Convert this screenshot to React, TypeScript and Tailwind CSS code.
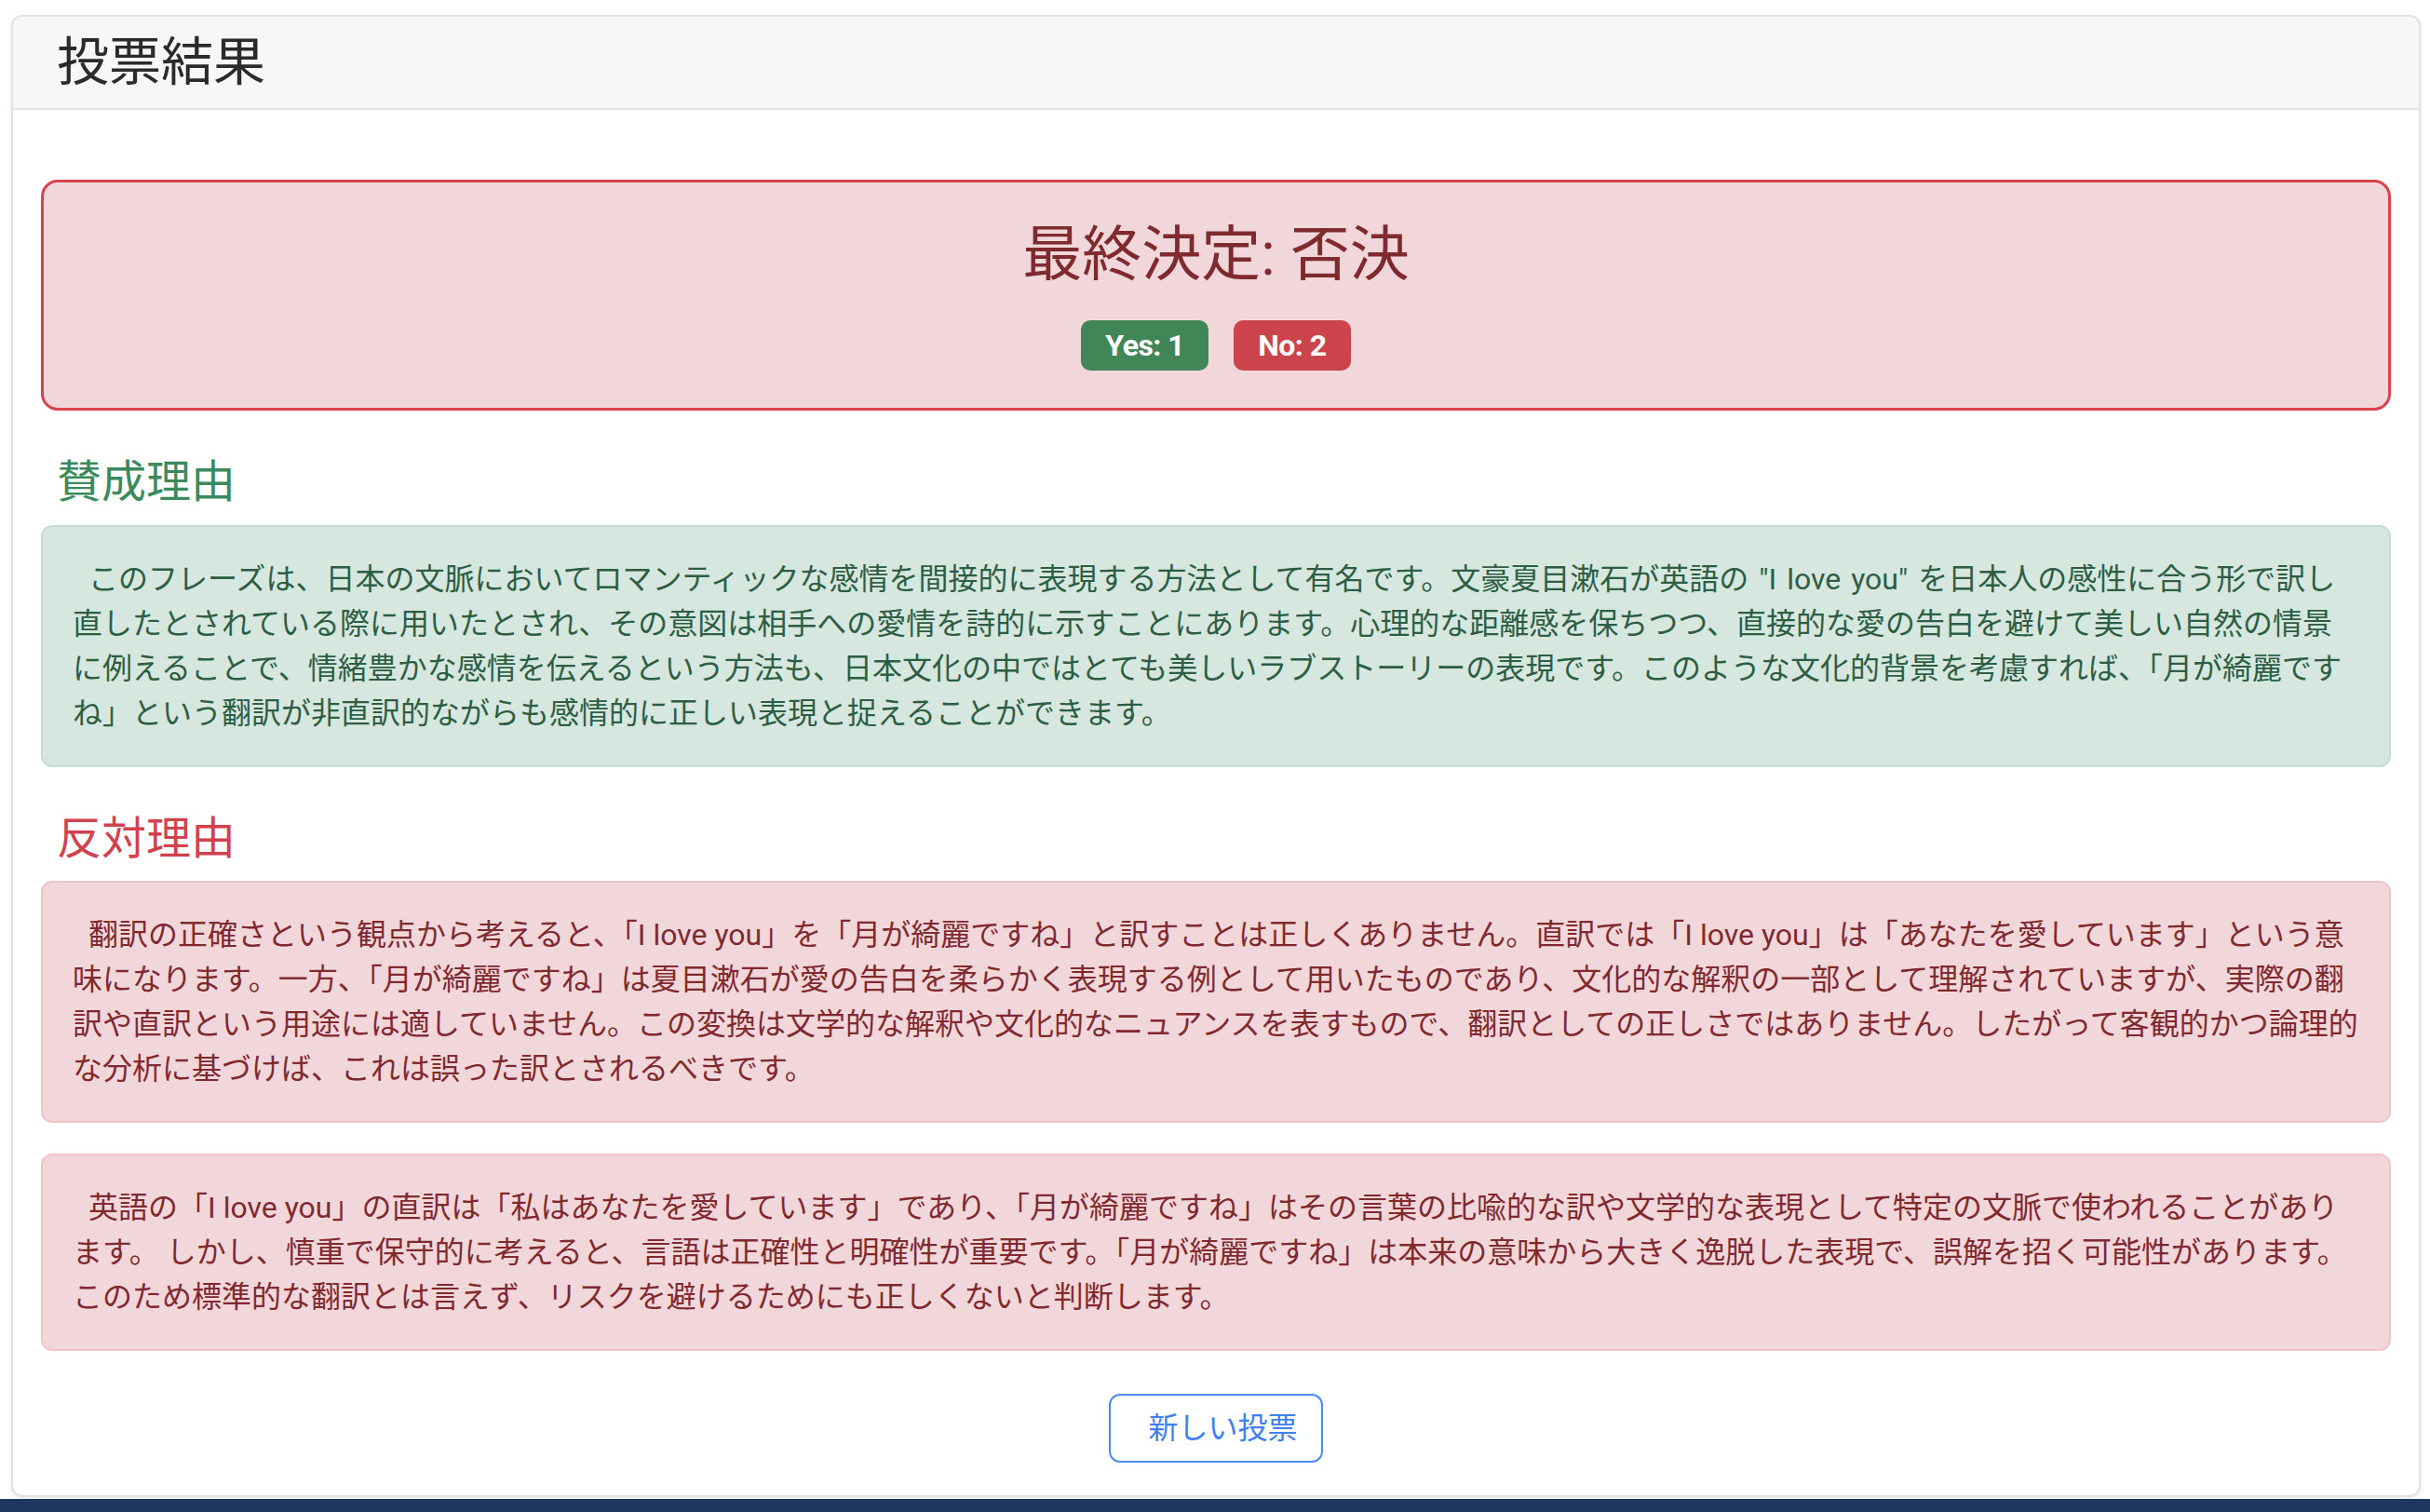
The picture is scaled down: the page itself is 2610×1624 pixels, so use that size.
const proReasons = [
  'このフレーズは、日本の文脈においてロマンティックな感情を間接的に表現する方法として有名です。文豪夏目漱石が英語の "I love you" を日本人の感性に合う形で訳し直したとされている際に用いたとされ、その意図は相手への愛情を詩的に示すことにあります。心理的な距離感を保ちつつ、直接的な愛の告白を避けて美しい自然の情景に例えることで、情緒豊かな感情を伝えるという方法も、日本文化の中ではとても美しいラブストーリーの表現です。このような文化的背景を考慮すれば、「月が綺麗ですね」という翻訳が非直訳的ながらも感情的に正しい表現と捉えることができます。',
];

const conReasons = [
  '翻訳の正確さという観点から考えると、「I love you」を「月が綺麗ですね」と訳すことは正しくありません。直訳では「I love you」は「あなたを愛しています」という意味になります。一方、「月が綺麗ですね」は夏目漱石が愛の告白を柔らかく表現する例として用いたものであり、文化的な解釈の一部として理解されていますが、実際の翻訳や直訳という用途には適していません。この変換は文学的な解釈や文化的なニュアンスを表すもので、翻訳としての正しさではありません。したがって客観的かつ論理的な分析に基づけば、これは誤った訳とされるべきです。',
  '英語の「I love you」の直訳は「私はあなたを愛しています」であり、「月が綺麗ですね」はその言葉の比喩的な訳や文学的な表現として特定の文脈で使われることがあります。 しかし、慎重で保守的に考えると、言語は正確性と明確性が重要です。「月が綺麗ですね」は本来の意味から大きく逸脱した表現で、誤解を招く可能性があります。このため標準的な翻訳とは言えず、リスクを避けるためにも正しくないと判断します。',
];

export default function App() {
  return (
    <div className="min-h-screen bg-white font-['Roboto','Noto_Sans_CJK_JP',sans-serif] text-[#2b2b2b]">
      <div className="pl-[12px] pr-[10px] pt-[16px] pb-[2px]">
        <div className="overflow-hidden rounded-[12px] border-2 border-[#e2e2e2] bg-white shadow-[0_2px_6px_rgba(0,0,0,0.08)]">
          {/* header */}
          <div className="border-b-2 border-[#e4e5e7] bg-[#f7f7f8] pl-[47px] pt-[16px] pb-[15px]">
            <h3 className="text-[56px] font-normal leading-[1.2]">投票結果</h3>
          </div>

          <div className="flex flex-col px-[30px] pt-[75px] pb-[35px]">
            {/* final decision */}
            <div className="mb-[48px] rounded-[18px] border-[3px] border-[#d9434e] bg-[#f2d7da] pt-[40px] pb-[40px] text-center">
              <h2 className="text-[64px] font-normal leading-[1.2] text-[#7e2a2f]">最終決定: 否決</h2>
              <div className="mt-[31px] flex justify-center gap-[27px] text-[32px] font-bold tracking-[-0.5px] text-white">
                <span className="flex h-[54px] items-center rounded-[10px] bg-[#418657] px-[26px]">Yes: 1</span>
                <span className="flex h-[54px] items-center rounded-[10px] bg-[#cb444b] px-[26px]">No: 2</span>
              </div>
            </div>

            {/* pro */}
            <h4 className="mb-[17px] pl-[17px] text-[48px] font-normal leading-[1.2] text-[#3b8a5b]">賛成理由</h4>
            {proReasons.map((r, i) => (
              <div key={i} className="rounded-[12px] border-2 border-[#c4dfd2] bg-[#d5e7de] p-[32px] text-[32px] leading-[48px] text-[#2d5e43]">
                <p className="indent-[17px] [word-spacing:3px]">{r}</p>
              </div>
            ))}

            {/* con */}
            <h4 className="mt-[48px] mb-[17px] pl-[17px] text-[48px] font-normal leading-[1.2] text-[#d2414e]">反対理由</h4>
            <div className="flex flex-col gap-[33px]">
              {conReasons.map((r, i) => (
                <div key={i} className="rounded-[12px] border-2 border-[#efc5c9] bg-[#f2d7da] p-[32px] text-[32px] leading-[48px] text-[#80292f]">
                  <p className="indent-[17px]">{r}</p>
                </div>
              ))}
            </div>

            <div className="mt-[46px] flex justify-center">
              <button className="rounded-[12px] border-2 border-[#4d8af5] bg-white py-[11px] pl-[40px] pr-[25px] text-[32px] leading-[48px] text-[#3f7fef]">
                新しい投票
              </button>
            </div>
          </div>
        </div>
      </div>
      <div className="h-[60px] bg-[#1d385f]" />
    </div>
  );
}
